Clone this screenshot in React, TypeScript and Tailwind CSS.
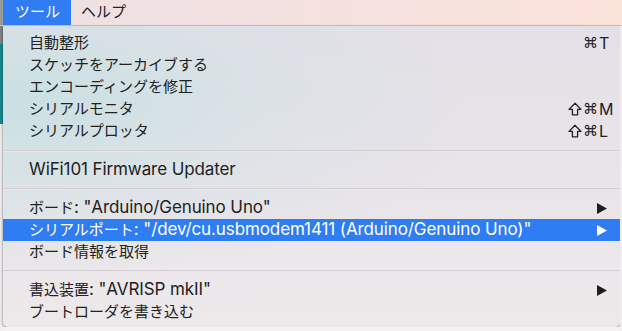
import React from "react";

type Item =
  | { kind: "item"; label: string; shift?: boolean; key?: string; arrow?: boolean; active?: boolean }
  | { kind: "sep"; h: string };

const items: Item[] = [
  { kind: "item", label: "自動整形", key: "T" },
  { kind: "item", label: "スケッチをアーカイブする" },
  { kind: "item", label: "エンコーディングを修正" },
  { kind: "item", label: "シリアルモニタ", shift: true, key: "M" },
  { kind: "item", label: "シリアルプロッタ", shift: true, key: "L" },
  { kind: "sep", h: "h-[17px]" },
  { kind: "item", label: "WiFi101 Firmware Updater" },
  { kind: "sep", h: "h-[16px]" },
  { kind: "item", label: 'ボード: "Arduino/Genuino Uno"', arrow: true },
  {
    kind: "item",
    label: 'シリアルポート: "/dev/cu.usbmodem1411 (Arduino/Genuino Uno)"',
    arrow: true,
    active: true,
  },
  { kind: "item", label: "ボード情報を取得" },
  { kind: "sep", h: "h-[16px]" },
  { kind: "item", label: '書込装置: "AVRISP mkII"', arrow: true },
  { kind: "item", label: "ブートローダを書き込む" },
];

const CJK = /([\u3000-\u30ff\u4e00-\u9fff]+)/;

function Label({ text }: { text: string }) {
  const parts = text.split(CJK).filter((p) => p.length > 0);
  return (
    <span className="flex-1 whitespace-nowrap">
      {parts.map((p, i) =>
        CJK.test(p) ? (
          <span key={i} className="text-[15px]">
            {p}
          </span>
        ) : (
          <span key={i} className="text-[17px] tracking-[-0.1px] font-['Inter',sans-serif]">
            {p}
          </span>
        )
      )}
    </span>
  );
}

function Arrow({ white }: { white?: boolean }) {
  return (
    <svg width="10" height="11" viewBox="0 0 10 11">
      <polygon points="0,0 10,5.5 0,11" fill={white ? "#ffffff" : "#1e1e1e"} />
    </svg>
  );
}

function ShiftIcon() {
  return (
    <svg width="14" height="14" viewBox="0 0 14 14" className="mr-[1px]">
      <polygon
        points="7,1.2 13,7.4 9.6,7.4 9.6,12.8 4.4,12.8 4.4,7.4 1,7.4"
        fill="none"
        stroke="#222"
        strokeWidth="1.3"
        strokeLinejoin="round"
      />
    </svg>
  );
}

export default function App() {
  return (
    <div className="w-[622px] h-[331px] overflow-hidden flex flex-col bg-[#f2f0f0] font-['Inter','Noto_Sans_CJK_JP',sans-serif]">
      {/* menu bar */}
      <div className="h-[26px] flex items-stretch bg-[linear-gradient(90deg,#eee0e3_0%,#f4e1e0_50%,#fbe3da_100%)] border-b border-[#d6c9cb] text-[15px] text-[#222]">
        <div className="w-[3px] bg-[#9a9a9a]" />
        <div className="w-[68px] bg-[#2f7cf3] text-white flex items-center pl-[12px]">ツール</div>
        <div className="flex items-center pl-[10px]">ヘルプ</div>
      </div>
      <div className="flex flex-1 min-h-0">
        {/* underlying window strip on the left */}
        <div className="w-[3px] flex flex-col">
          <div className="h-[18px] bg-[#7d8587]" />
          <div className="h-[80px] bg-[#178a8c]" />
          <div className="flex-1 bg-[#f1efef]" />
        </div>
        {/* dropdown */}
        <div className="w-[617px] flex flex-col">
          <div className="h-[301px] rounded-b-[5px] shadow-[0_1px_3px_rgba(0,0,0,0.55)] bg-[radial-gradient(ellipse_at_0%_25%,rgba(196,224,226,0.85)_0%,rgba(205,225,228,0.4)_30%,transparent_55%),linear-gradient(180deg,#e4e0e7_0%,#e8e4e9_50%,#ede9eb_100%)] pt-[6px] pb-[4px] flex flex-col text-[15px] text-[#222]">
            {items.map((it, i) =>
              it.kind === "sep" ? (
                <div key={i} className={`${it.h} flex items-center`}>
                  <div className="h-[2px] w-full bg-[#d3cfd3] border-b border-[#e9e6ea]" />
                </div>
              ) : (
                <div
                  key={i}
                  className={`h-[22px] flex items-center pl-[26px] ${
                    it.active ? "bg-[#2f7df3] text-white" : ""
                  }`}
                >
                  <Label text={it.label} />
                  {it.key && (
                    <span className="flex items-center text-[15px]">
                      <span className="w-[40px] flex items-center justify-end">
                        {it.shift && <ShiftIcon />}
                        <span className="font-['DejaVu_Sans',sans-serif]">⌘</span>
                      </span>
                      <span className="w-[22px] pl-[1px] font-['Inter',sans-serif] text-[16px]">{it.key}</span>
                    </span>
                  )}
                  {it.arrow && (
                    <span className="w-[23px] flex items-center">
                      <Arrow white={it.active} />
                    </span>
                  )}
                </div>
              )
            )}
          </div>
          <div className="flex-1 bg-[#f3f1f1]" />
        </div>
        <div className="flex-1 bg-[#efeded]" />
      </div>
    </div>
  );
}
